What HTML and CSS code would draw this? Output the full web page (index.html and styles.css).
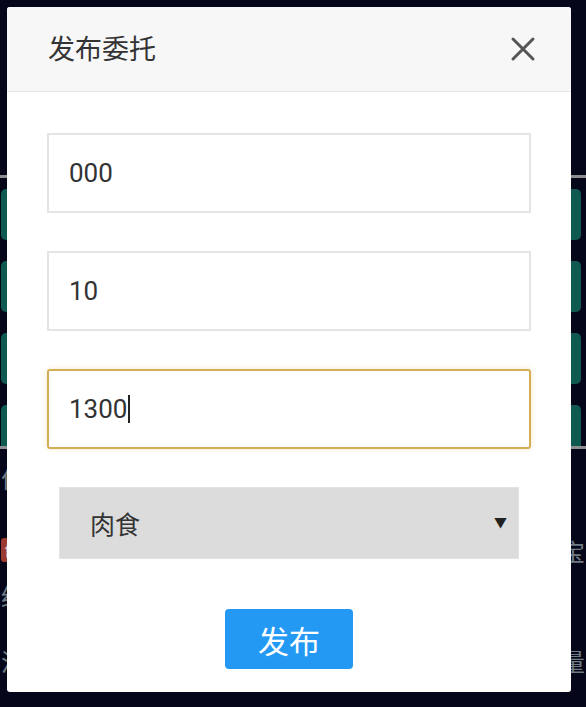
FILE: index.html
```html
<!DOCTYPE html>
<html lang="zh">
<head>
<meta charset="utf-8">
<title>发布委托</title>
<link rel="stylesheet" href="styles.css">
</head>
<body>
<div class="page">
  <div class="list">
    <div class="bar"></div>
    <div class="bar"></div>
    <div class="bar"></div>
    <div class="bar"></div>
  </div>
  <div class="info">
    <div class="row r1"><span>价</span></div>
    <div class="row r2"><span class="badge">售</span><span>宝</span></div>
    <div class="row r3"><span>经</span></div>
    <div class="row r4"><span>流</span><span>量</span></div>
  </div>
</div>

<div class="overlay">
  <div class="modal">
    <div class="modal-header">
      <div class="modal-title">发布委托</div>
      <svg class="close" width="26" height="26" viewBox="0 0 26 26" aria-label="关闭">
        <path d="M3 3 L23 23 M23 3 L3 23" stroke="#555" stroke-width="3" stroke-linecap="round" fill="none"/>
      </svg>
    </div>
    <div class="modal-body">
      <div class="field">000</div>
      <div class="field">10</div>
      <div class="field focused">1300<span class="caret"></span></div>
      <div class="select">
        <span>肉食</span>
        <span class="arrow">▼</span>
      </div>
      <div class="actions">
        <button class="btn">发布</button>
      </div>
    </div>
  </div>
</div>
</body>
</html>
```

FILE: styles.css
```css
html, body {
  margin: 0;
  padding: 0;
}
body {
  background: #06061a;
  font-family: Roboto, "Noto Sans CJK SC", "Noto Sans", sans-serif;
  width: 586px;
  height: 707px;
  overflow: hidden;
}
.page {
  padding-top: 175px;
}
.list {
  height: 257px;
  border-top: 3px solid #8d8d92;
  border-bottom: 3px solid #8d8d92;
  overflow: hidden;
  padding: 11px 5px 0 1px;
  display: flex;
  flex-direction: column;
  gap: 21px;
  box-sizing: content-box;
}
.bar {
  height: 51px;
  flex: none;
  background: #0f5a50;
  border-radius: 5px;
}
.info {
  display: flex;
  flex-direction: column;
  color: #6f7c84;
  font-size: 24px;
}
.row {
  display: flex;
  justify-content: space-between;
  align-items: center;
  padding: 0 1px;
}
.r1 { height: 56px; }
.r2 { height: 50px; margin-top: 20px; }
.r3 { height: 40px; }
.r4 { height: 90px; }
.badge {
  background: #9b3a32;
  color: #e8c8c0;
  font-size: 14px;
  padding: 2px 3px;
  border-radius: 3px;
}
.overlay {
  position: fixed;
  inset: 0;
}
.modal {
  position: absolute;
  left: 7px;
  top: 7px;
  width: 564px;
  height: 685px;
  background: #ffffff;
  border-radius: 3px;
  overflow: hidden;
}
.modal-header {
  height: 84px;
  background: #f7f7f8;
  border-bottom: 1px solid #e6e6e6;
  display: flex;
  align-items: center;
  justify-content: space-between;
  padding: 0 35px 0 41px;
}
.modal-title {
  font-size: 27px;
  color: #333333;
  margin-top: -4px;
}
.close {
  display: block;
}
.modal-body {
  padding: 41px 40px 0 40px;
  display: flex;
  flex-direction: column;
}
.field {
  height: 80px;
  box-sizing: border-box;
  border: 2px solid #e4e4e4;
  margin-bottom: 38px;
  padding-left: 20px;
  display: flex;
  align-items: center;
  font-size: 26px;
  color: #333333;
}
.field.focused {
  border-color: #d3ae55;
  border-radius: 3px;
  box-shadow: 0 0 5px rgba(230, 200, 110, 0.45);
}
.caret {
  display: inline-block;
  width: 2px;
  height: 28px;
  background: #222;
  margin-left: 1px;
}
.select {
  margin: 0 12px;
  height: 72px;
  box-sizing: border-box;
  background: #dcdcdc;
  border: 1px solid #e3e3e3;
  display: flex;
  align-items: center;
  justify-content: space-between;
  padding: 0 11px 0 30px;
  font-size: 25px;
  color: #333333;
}
.arrow {
  font-size: 13px;
  color: #222;
  margin-top: -4px;
}
.actions {
  display: flex;
  justify-content: center;
  padding-top: 50px;
}
.btn {
  width: 128px;
  height: 60px;
  border: none;
  border-radius: 4px;
  background: #2399f4;
  color: #ffffff;
  font-family: "Noto Sans CJK SC", sans-serif;
  font-size: 31px;
  padding: 0;
  line-height: 1;
}
```
